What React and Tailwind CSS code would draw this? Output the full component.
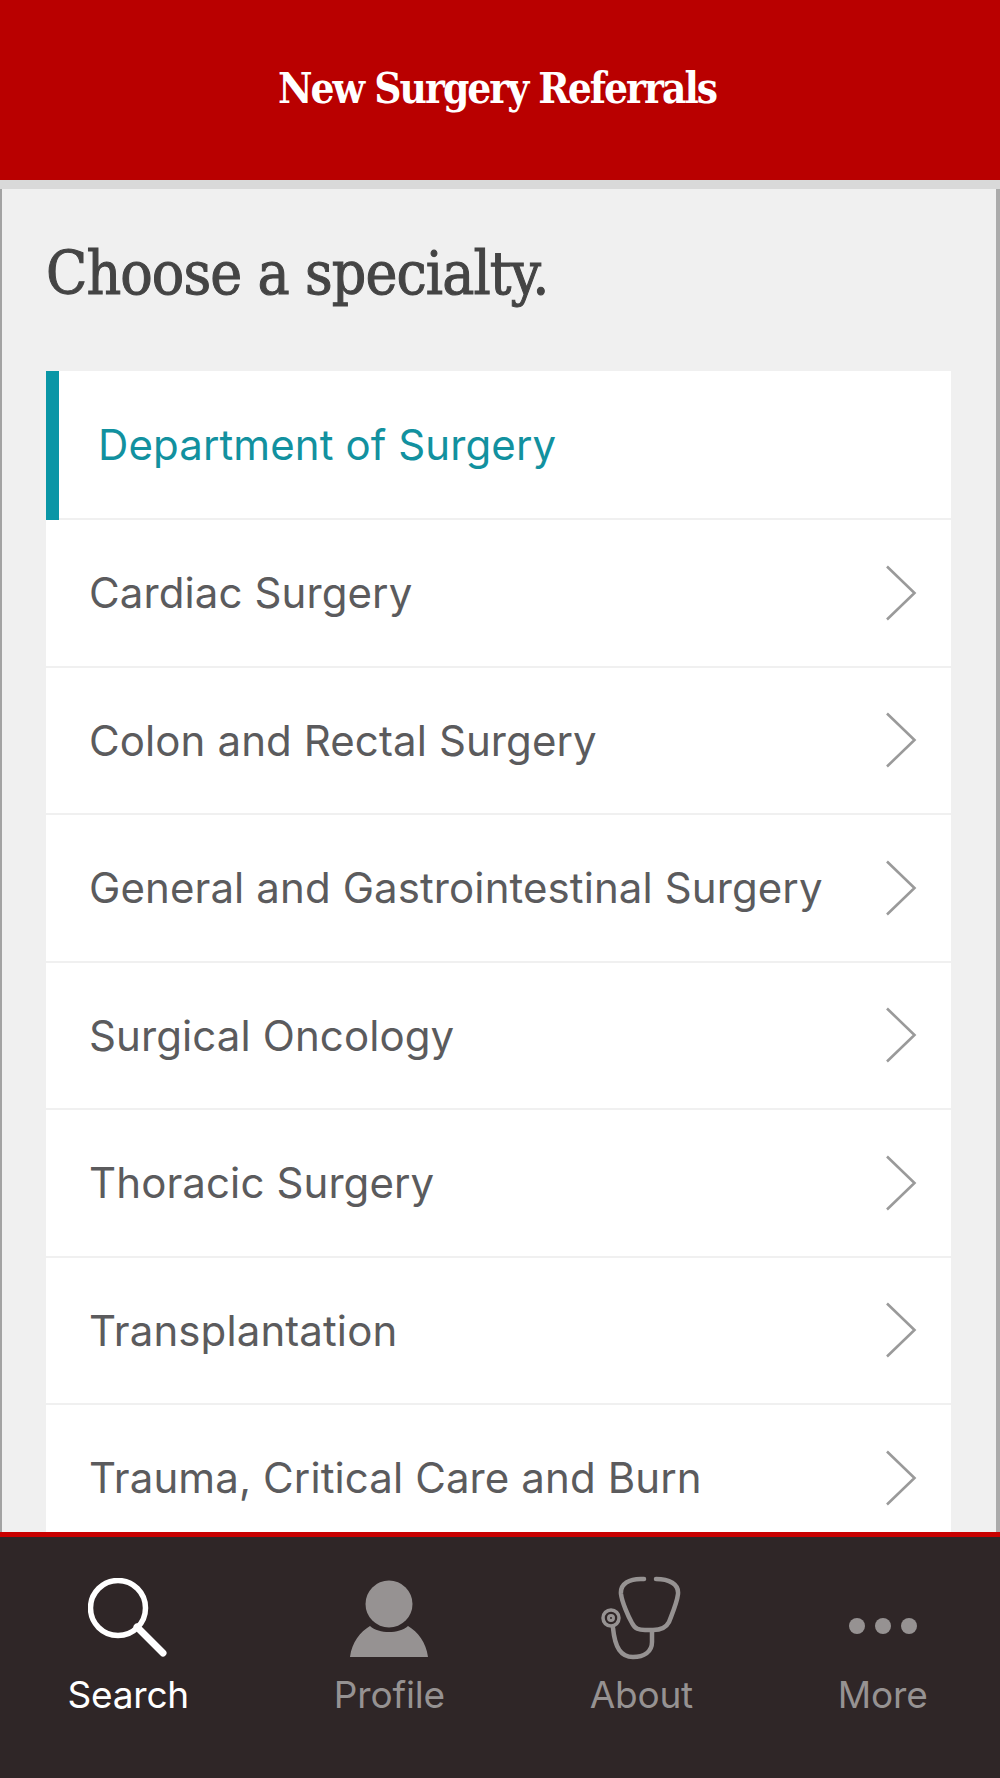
const rows = [
  "Cardiac Surgery",
  "Colon and Rectal Surgery",
  "General and Gastrointestinal Surgery",
  "Surgical Oncology",
  "Thoracic Surgery",
  "Transplantation",
  "Trauma, Critical Care and Burn",
];

function Chevron() {
  return (
    <svg className="h-[56px] w-[32px] shrink-0" viewBox="0 0 32 56" fill="none" stroke="#9a9a9a" strokeWidth="2.6">
      <path d="M2 1.5 L29.5 28 L2 54.5" />
    </svg>
  );
}

function SearchIcon() {
  return (
    <svg className="h-[80px] w-[80px]" viewBox="0 0 80 80" fill="none" stroke="#fff" strokeWidth="5.5" strokeLinecap="round">
      <circle cx="30" cy="30" r="27.5" />
      <path d="M49 49 L75 75" strokeWidth="7" />
    </svg>
  );
}

function ProfileIcon() {
  return (
    <svg className="h-[80px] w-[80px]" viewBox="0 0 80 80" fill="#969292">
      <circle cx="40" cy="26" r="23.5" />
      <path d="M1 79 C3 64 11 54 21 48 C30 56 50 56 59 48 C69 54 77 64 79 79 Z" />
    </svg>
  );
}

function StethIcon() {
  return (
    <svg className="h-[84px] w-[80px]" viewBox="0 0 80 84" fill="none" stroke="#969292" strokeWidth="4.5" strokeLinecap="round" strokeLinejoin="round">
      <path d="M43 3 C28 2 19 8 20 18 C21 26 27 40 31 47 C34 53 38 54 44 54 L52 54 C60 54 65 52 68 46 C71 38 76 27 77 18 C78 8 68 3 55 3" />
      <path d="M51 55 L51 66 C51 76 43 81 32 81 C20 81 14 72 12 52" />
      <circle cx="10" cy="42" r="8" strokeWidth="3.5" />
      <circle cx="10" cy="42" r="2.5" strokeWidth="3" />
    </svg>
  );
}

function DotsIcon() {
  return (
    <svg className="h-[80px] w-[70px]" viewBox="0 0 70 80" fill="#969292">
      <circle cx="9" cy="48" r="8" />
      <circle cx="35" cy="48" r="8" />
      <circle cx="61" cy="48" r="8" />
    </svg>
  );
}

function Tab({ icon, label, active, className = "" }) {
  return (
    <div className={`flex flex-col items-center ${className}`}>
      <div className="flex h-[86px] items-center justify-center">{icon}</div>
      <span className={`mt-[11px] text-[37px] leading-[46px] tracking-[-0.2px] ${active ? "text-white" : "text-[#969292]"}`}>{label}</span>
    </div>
  );
}

export default function App() {
  return (
    <div className="flex h-[1778px] w-[1000px] flex-col overflow-hidden bg-[#f0f0f0] font-['Inter','Liberation_Sans',sans-serif]">
      <header className="flex h-[180px] shrink-0 items-center justify-center bg-[#b90000]">
        <h1 className="mr-[6px] mt-[-4px] font-['DejaVu_Serif_Condensed','DejaVu_Serif',serif] text-[42px] font-bold tracking-[-2px] text-white">New Surgery Referrals</h1>
      </header>
      <div className="h-[9px] shrink-0 bg-[#d9d9d9]" />
      <main className="min-h-0 flex-1 overflow-hidden border-l-2 border-r-[4px] border-l-[#a3a3a3] border-r-[#ababab] px-[44px]">
        <h2 className="mb-[58px] mt-[44px] h-[80px] font-['DejaVu_Serif_Condensed','DejaVu_Serif',serif] text-[60px] leading-[80px] tracking-[-0.9px] text-[#444444] [-webkit-text-stroke:1px_#444444]">Choose a specialty.</h2>
        <ul className="mr-[1px] bg-white">
          <li className="flex h-[149px]">
            <div className="w-[13px] shrink-0 bg-[#0a96a6]" />
            <div className="flex flex-1 items-center border-b-2 border-[#f0f0f0] pl-[39px] pb-[1px] text-[42px] tracking-[0.1px] text-[#12919f]">
              Department of Surgery
            </div>
          </li>
          {rows.map((r) => (
            <li key={r} className="flex h-[147.5px] items-center justify-between border-b-2 border-[#f0f0f0] pl-[43px] pr-[34px] text-[42px] tracking-[0.1px] text-[#5b5b5d]">
              <span>{r}</span>
              <Chevron />
            </li>
          ))}
        </ul>
      </main>
      <nav className="flex h-[246px] shrink-0 justify-around border-t-[5px] border-[#c80000] bg-[#2f2627] pt-[38px]">
        <Tab icon={<SearchIcon />} label="Search" active className="ml-[-5px]" />
        <Tab icon={<ProfileIcon />} label="Profile" />
        <Tab icon={<StethIcon />} label="About" />
        <Tab icon={<DotsIcon />} label="More" />
      </nav>
    </div>
  );
}
